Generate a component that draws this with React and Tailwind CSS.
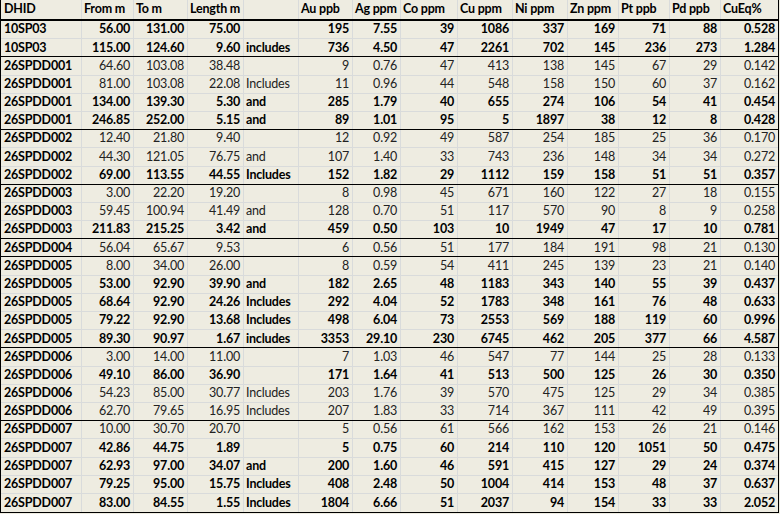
import React from "react";

const header = ["DHID", "From m", "To m", "Length m", "", "Au ppb", "Ag ppm", "Co ppm", "Cu ppm", "Ni ppm", "Zn ppm", "Pt ppb", "Pd ppb", "CuEq%"];

// [values..., bold, separatorAfter]
const rows = [
  [["10SP03", "56.00", "131.00", "75.00", "", "195", "7.55", "39", "1086", "337", "169", "71", "88", "0.528"], true, false],
  [["10SP03", "115.00", "124.60", "9.60", "includes", "736", "4.50", "47", "2261", "702", "145", "236", "273", "1.284"], true, true],
  [["26SPDD001", "64.60", "103.08", "38.48", "", "9", "0.76", "47", "413", "138", "145", "67", "29", "0.142"], false, false],
  [["26SPDD001", "81.00", "103.08", "22.08", "Includes", "11", "0.96", "44", "548", "158", "150", "60", "37", "0.162"], false, false],
  [["26SPDD001", "134.00", "139.30", "5.30", "and", "285", "1.79", "40", "655", "274", "106", "54", "41", "0.454"], true, false],
  [["26SPDD001", "246.85", "252.00", "5.15", "and", "89", "1.01", "95", "5", "1897", "38", "12", "8", "0.428"], true, true],
  [["26SPDD002", "12.40", "21.80", "9.40", "", "12", "0.92", "49", "587", "254", "185", "25", "36", "0.170"], false, false],
  [["26SPDD002", "44.30", "121.05", "76.75", "and", "107", "1.40", "33", "743", "236", "148", "34", "34", "0.272"], false, false],
  [["26SPDD002", "69.00", "113.55", "44.55", "Includes", "152", "1.82", "29", "1112", "159", "158", "51", "51", "0.357"], true, true],
  [["26SPDD003", "3.00", "22.20", "19.20", "", "8", "0.98", "45", "671", "160", "122", "27", "18", "0.155"], false, false],
  [["26SPDD003", "59.45", "100.94", "41.49", "and", "128", "0.70", "51", "117", "570", "90", "8", "9", "0.258"], false, false],
  [["26SPDD003", "211.83", "215.25", "3.42", "and", "459", "0.50", "103", "10", "1949", "47", "17", "10", "0.781"], true, true],
  [["26SPDD004", "56.04", "65.67", "9.53", "", "6", "0.56", "51", "177", "184", "191", "98", "21", "0.130"], false, true],
  [["26SPDD005", "8.00", "34.00", "26.00", "", "8", "0.59", "54", "411", "245", "139", "23", "21", "0.140"], false, false],
  [["26SPDD005", "53.00", "92.90", "39.90", "and", "182", "2.65", "48", "1183", "343", "140", "55", "39", "0.437"], true, false],
  [["26SPDD005", "68.64", "92.90", "24.26", "Includes", "292", "4.04", "52", "1783", "348", "161", "76", "48", "0.633"], true, false],
  [["26SPDD005", "79.22", "92.90", "13.68", "Includes", "498", "6.04", "73", "2553", "569", "188", "119", "60", "0.996"], true, false],
  [["26SPDD005", "89.30", "90.97", "1.67", "includes", "3353", "29.10", "230", "6745", "462", "205", "377", "66", "4.587"], true, true],
  [["26SPDD006", "3.00", "14.00", "11.00", "", "7", "1.03", "46", "547", "77", "144", "25", "28", "0.133"], false, false],
  [["26SPDD006", "49.10", "86.00", "36.90", "", "171", "1.64", "41", "513", "500", "125", "26", "30", "0.350"], true, false],
  [["26SPDD006", "54.23", "85.00", "30.77", "Includes", "203", "1.76", "39", "570", "475", "125", "29", "34", "0.385"], false, false],
  [["26SPDD006", "62.70", "79.65", "16.95", "Includes", "207", "1.83", "33", "714", "367", "111", "42", "49", "0.395"], false, true],
  [["26SPDD007", "10.00", "30.70", "20.70", "", "5", "0.56", "61", "566", "162", "153", "26", "21", "0.146"], false, false],
  [["26SPDD007", "42.86", "44.75", "1.89", "", "5", "0.75", "60", "214", "110", "120", "1051", "50", "0.475"], true, false],
  [["26SPDD007", "62.93", "97.00", "34.07", "and", "200", "1.60", "46", "591", "415", "127", "29", "24", "0.374"], true, false],
  [["26SPDD007", "79.25", "95.00", "15.75", "Includes", "408", "2.48", "50", "1004", "414", "153", "48", "37", "0.637"], true, false],
  [["26SPDD007", "83.00", "84.55", "1.55", "Includes", "1804", "6.66", "51", "2037", "94", "154", "33", "33", "2.052"], true, false],
];

const cols = "grid grid-cols-[81px_52px_54px_56px_55px_54px_48px_57px_55px_55px_51px_51px_51px_57px]";

function Cell({ children, i, align, last }) {
  const base = "flex items-center overflow-hidden whitespace-nowrap leading-none h-full";
  const border = last ? "" : " border-r border-[#d9dbdb]";
  let al;
  if (align === "left") al = i === 0 ? " justify-start pl-[3px]" : " justify-start pl-[2px]";
  else al = " justify-end pr-[3px]";
  return <div className={base + border + al}>{children}</div>;
}

export default function App() {
  return (
    <div className="min-h-screen bg-[#eeece1] text-black" style={{ fontFamily: "Lato, 'Liberation Sans', sans-serif" }}>
      <div className="w-[779px] border-l border-r border-b border-black bg-[#eeece1] text-[12.5px] tracking-[-0.2px]">
        <div className={cols + " h-[21px] border-b-2 border-black font-bold"}>
          {header.map((h, i) => (
            <Cell key={i} i={i} align="left" last={i === header.length - 1}>
              {h}
            </Cell>
          ))}
        </div>
        {rows.map(([vals, bold, sep], r) => {
          const isLast = r === rows.length - 1;
          const rb = isLast ? "" : sep ? " border-b border-black" : " border-b border-[#d9dbdb]";
          return (
            <div key={r} className={cols + " h-[18.2px]" + rb + (bold ? " font-bold text-black" : " font-normal text-[#222222]")}>
              {vals.map((v, i) => (
                <Cell
                  key={i}
                  i={i}
                  align={i === 0 || i === 4 ? "left" : "right"}
                  last={i === vals.length - 1}
                >
                  {i === 0 ? <span className="font-bold text-black">{v}</span> : v}
                </Cell>
              ))}
            </div>
          );
        })}
      </div>
    </div>
  );
}
